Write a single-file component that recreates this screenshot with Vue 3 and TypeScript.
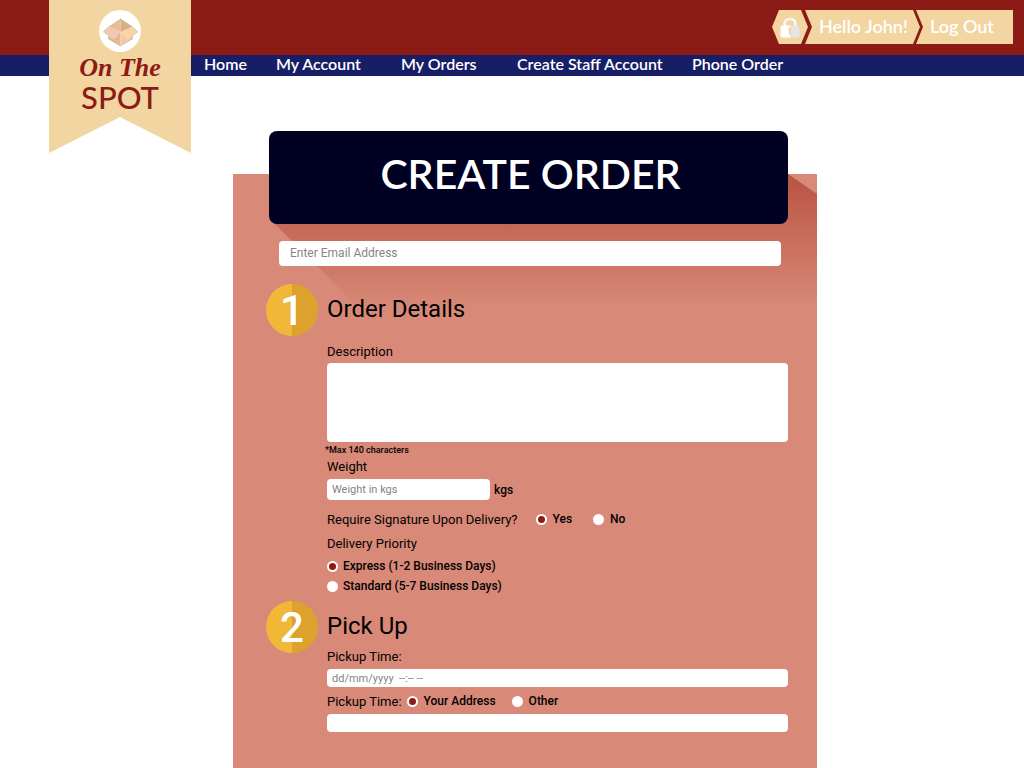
<script setup lang="ts">
import { ref } from 'vue'

interface NavLink {
  label: string
  href: string
}

const links: NavLink[] = [
  { label: 'Home', href: '#home' },
  { label: 'My Account', href: '#account' },
  { label: 'My Orders', href: '#orders' },
  { label: 'Create Staff Account', href: '#staff' },
  { label: 'Phone Order', href: '#phone' },
]

const email = ref('')
const description = ref('')
const weight = ref('')
const signature = ref<'yes' | 'no'>('yes')
const priority = ref<'express' | 'standard'>('express')
const pickupTime = ref('')
const pickupPlace = ref<'own' | 'other'>('own')
const address = ref('')
</script>

<template>
  <div class="page">
    <header class="header">
      <div class="topbar">
        <a class="tag lock" href="#security" aria-label="Security">
          <svg width="20" height="22" viewBox="0 0 20 22" aria-hidden="true">
            <path d="M4.700 10V7.500C4.700 4.500 7 3 10 3s5.300 1.500 5.300 4.500V10" fill="none" stroke="#fdf8ee" stroke-width="2.600" />
            <path d="M2 9.500h8V21.500H2.500a2 2 0 0 1-2-2V11a1.500 1.500 0 0 1 1.500-1.500z" fill="#fff" />
            <path d="M10 9.500h8a1.500 1.500 0 0 1 1.500 1.500v8.500a2 2 0 0 1-2 2H10z" fill="#e6e6e6" />
            <path d="M10 11.500a1.800 1.800 0 0 1 1 3.300l.6 3.700H8.400L9 14.800a1.800 1.800 0 0 1 1-3.300z" fill="#f2d5a0" />
          </svg>
        </a>
        <a class="tag user" href="#profile">Hello John!</a>
        <a class="tag logout" href="#logout">Log Out</a>
      </div>
      <nav class="nav" aria-label="Main">
        <a v-for="link in links" :key="link.href" :href="link.href">{{ link.label }}</a>
      </nav>
      <a class="ribbon" href="#home">
        <svg width="42" height="42" viewBox="0 0 42 42" aria-hidden="true">
          <circle cx="21" cy="21" r="21" fill="#fff" />
          <path d="M9.500 24v5l12 7V22z" fill="#e3ba90" />
          <path d="M33.500 24v5l-12 7V22z" fill="#f3c9ad" />
          <path d="M21.500 9L10 16.700 21.500 22.300z" fill="#e8be94" />
          <path d="M21.500 9L33.300 16.700 21.500 22.300z" fill="#d9ae86" />
          <path d="M10 16.700L21.500 22.300 15 29.500 4.300 21.700z" fill="#f0cab0" />
          <path d="M33.300 16.700L21.500 22.300 28.500 29.500 38.700 21.700z" fill="#fcd3a3" />
          <path d="M21.500 9L33.300 16.700l5.400 5-5.200 3.800V29l-12 7-12-7v-3.500l-5.200-3.800 5.700-5z" fill="none" stroke="#a39380" stroke-width=".7" stroke-dasharray="1 1" />
        </svg>
        <span class="script">On The</span>
        <span class="name">SPOT</span>
      </a>
    </header>

    <main class="main">
      <form class="card" @submit.prevent>
        <div class="shade"></div>
        <h1 class="title">CREATE ORDER</h1>
        <input v-model="email" class="field email" type="email" placeholder="Enter Email Address" aria-label="Enter Email Address" />

        <section class="step">
          <span class="badge">1</span>
          <div class="content">
            <h2>Order Details</h2>
            <label class="label first" for="description">Description</label>
            <textarea id="description" v-model="description" class="field area" maxlength="140"></textarea>
            <p class="note">*Max 140 characters</p>
            <label class="label" for="weight">Weight</label>
            <div class="weight">
              <input id="weight" v-model="weight" class="field" type="text" placeholder="Weight in kgs" />
              <span>kgs</span>
            </div>
            <div class="row signature" role="radiogroup" aria-labelledby="signature-label">
              <span id="signature-label" class="label">Require Signature Upon Delivery?</span>
              <label class="option"><input v-model="signature" type="radio" name="signature" value="yes" />Yes</label>
              <label class="option"><input v-model="signature" type="radio" name="signature" value="no" />No</label>
            </div>
            <div class="priority" role="radiogroup" aria-labelledby="priority-label">
              <span id="priority-label" class="label">Delivery Priority</span>
              <label class="option"><input v-model="priority" type="radio" name="priority" value="express" />Express (1-2 Business Days)</label>
              <label class="option"><input v-model="priority" type="radio" name="priority" value="standard" />Standard (5-7 Business Days)</label>
            </div>
          </div>
        </section>

        <section class="step second">
          <span class="badge">2</span>
          <div class="content">
            <h2>Pick Up</h2>
            <label class="label" for="pickup-time">Pickup Time:</label>
            <input id="pickup-time" v-model="pickupTime" class="field slim" type="text" placeholder="dd/mm/yyyy&nbsp; --:-- --" />
            <div class="row place" role="radiogroup" aria-labelledby="place-label">
              <span id="place-label" class="label">Pickup Time:</span>
              <label class="option"><input v-model="pickupPlace" type="radio" name="place" value="own" />Your Address</label>
              <label class="option"><input v-model="pickupPlace" type="radio" name="place" value="other" />Other</label>
            </div>
            <input v-model="address" class="field slim" type="text" aria-label="Pickup address" />
          </div>
        </section>
      </form>
    </main>
  </div>
</template>

<style>
body {
  background: #fff;
}
</style>

<style scoped>
.page {
  display: flex;
  flex-direction: column;
  min-height: 100vh;
  font-family: Roboto, sans-serif;
  color: #000;
}
.page *,
.page {
  box-sizing: border-box;
}
a {
  color: #fff;
  text-decoration: none;
}
.header {
  position: relative;
  font-family: Lato, sans-serif;
}
.topbar {
  display: flex;
  justify-content: flex-end;
  height: 55px;
  padding: 10px 11px 11px 0;
  background: #8c1b15;
}
.tag {
  display: flex;
  align-items: center;
  height: 34px;
  background: #f2d5a0;
  font-size: 18px;
  font-weight: 600;
  line-height: 32px;
}
.lock {
  justify-content: center;
  width: 36px;
  clip-path: polygon(7px 0, calc(100% - 7px) 0, 100% 50%, calc(100% - 7px) 100%, 7px 100%, 0 50%);
}
.user {
  align-items: flex-start;
  width: 115px;
  margin-left: -3px;
  padding-left: 14px;
  clip-path: polygon(0 0, calc(100% - 7px) 0, 100% 50%, calc(100% - 7px) 100%, 0 100%, 7px 50%);
}
.logout {
  align-items: flex-start;
  width: 97px;
  margin-left: -4px;
  padding-left: 14px;
  clip-path: polygon(0 0, 100% 0, 100% 100%, 0 100%, 7px 50%);
}
.nav {
  display: grid;
  grid-template-columns: 72px 125px 116px 175px auto;
  height: 21px;
  padding-left: 204px;
  background: #171e66;
  font-size: 16px;
  font-weight: 600;
  line-height: 18px;
  white-space: nowrap;
}
.ribbon {
  position: absolute;
  top: 0;
  left: 49px;
  display: flex;
  flex-direction: column;
  align-items: center;
  width: 142px;
  height: 153px;
  padding-top: 10px;
  background: #f2d5a0;
  color: #8c1b15;
  clip-path: polygon(0 0, 100% 0, 100% 100%, 50% 117px, 0 100%);
}
.script {
  font-family: "Liberation Serif", serif;
  font-size: 26px;
  font-style: italic;
  font-weight: 700;
  line-height: 32px;
}
.name {
  font-size: 31px;
  font-weight: 500;
  line-height: 27px;
}
.main {
  display: flex;
  flex: 1;
  padding: 98px 207px 0 233px;
}
.card {
  position: relative;
  flex: 1;
  min-width: 0;
  padding: 0 29px 36px 33px;
  background: #d88977;
}
.shade {
  position: absolute;
  top: 0;
  left: 0;
  width: 100%;
  height: 134px;
  background: linear-gradient(#b95342, #d88977);
  clip-path: polygon(40px 48px, calc(100% - 29px) 0, 100% 20px, 100% 100%, 126px 100%);
}
.title {
  position: relative;
  margin: -43px 0 17px 3px;
  padding: 0 0 8px 4px;
  border-radius: 8px;
  background: #000022;
  color: #fff;
  font-family: Lato, sans-serif;
  font-size: 41px;
  font-weight: 600;
  line-height: 85px;
  text-align: center;
}
.field {
  display: block;
  width: 100%;
  margin: 0;
  padding: 0 5px;
  border: 0;
  border-radius: 4px;
  outline: none;
  background: #fff;
  color: #000;
  font-family: inherit;
  font-size: 11px;
  resize: none;
}
.field::placeholder {
  color: #848484;
  opacity: 1;
}
.email {
  position: relative;
  width: calc(100% - 20px);
  height: 25px;
  margin-left: 13px;
  padding: 0 11px 2px;
  font-size: 12px;
}
.step {
  position: relative;
  display: flex;
  gap: 9px;
  margin-top: 18px;
}
.second {
  margin-top: 7px;
}
.badge {
  flex: none;
  width: 52px;
  height: 52px;
  border-radius: 50%;
  background: linear-gradient(90deg, #f1b838 50%, #dca22d 50%);
  color: #fff;
  font-size: 42px;
  font-weight: 500;
  line-height: 54px;
  text-align: center;
}
.content {
  flex: 1;
  min-width: 0;
}
h2 {
  height: 47px;
  margin: 0;
  font-size: 24px;
  font-weight: 400;
  line-height: 51px;
}
.label {
  display: block;
  font-size: 13px;
  line-height: 18px;
}
.first {
  margin-top: 12px;
}
.area {
  height: 79px;
  margin-top: 2px;
}
.note {
  margin: 2px 0 2px -2px;
  font-size: 9px;
  font-weight: 500;
  line-height: 12px;
}
.weight {
  display: flex;
  align-items: center;
  gap: 4px;
  margin-top: 3px;
  font-size: 12px;
  font-weight: 500;
}
.weight .field {
  width: 163px;
  height: 21px;
}
.row {
  display: flex;
  align-items: flex-start;
}
.signature {
  gap: 21px;
  margin-top: 11px;
}
.signature .label {
  margin-right: -3px;
}
.option {
  display: flex;
  align-items: center;
  gap: 5px;
  font-size: 12px;
  font-weight: 500;
  line-height: 16px;
}
.row .option {
  gap: 6px;
}
.option input {
  appearance: none;
  width: 11px;
  height: 11px;
  margin: 0;
  border: 2px solid #fff;
  border-radius: 50%;
  background: #fff;
}
.option input:checked {
  background: #8c1b15;
}
.priority {
  display: flex;
  flex-direction: column;
  align-items: flex-start;
  gap: 4px;
  margin-top: 6px;
}
.priority .label {
  margin-bottom: 1px;
}
.slim {
  height: 18px;
  margin-top: 3px;
}
.place {
  gap: 16px;
  margin-top: 6px;
}
.place .label {
  margin-right: -11px;
}
</style>
